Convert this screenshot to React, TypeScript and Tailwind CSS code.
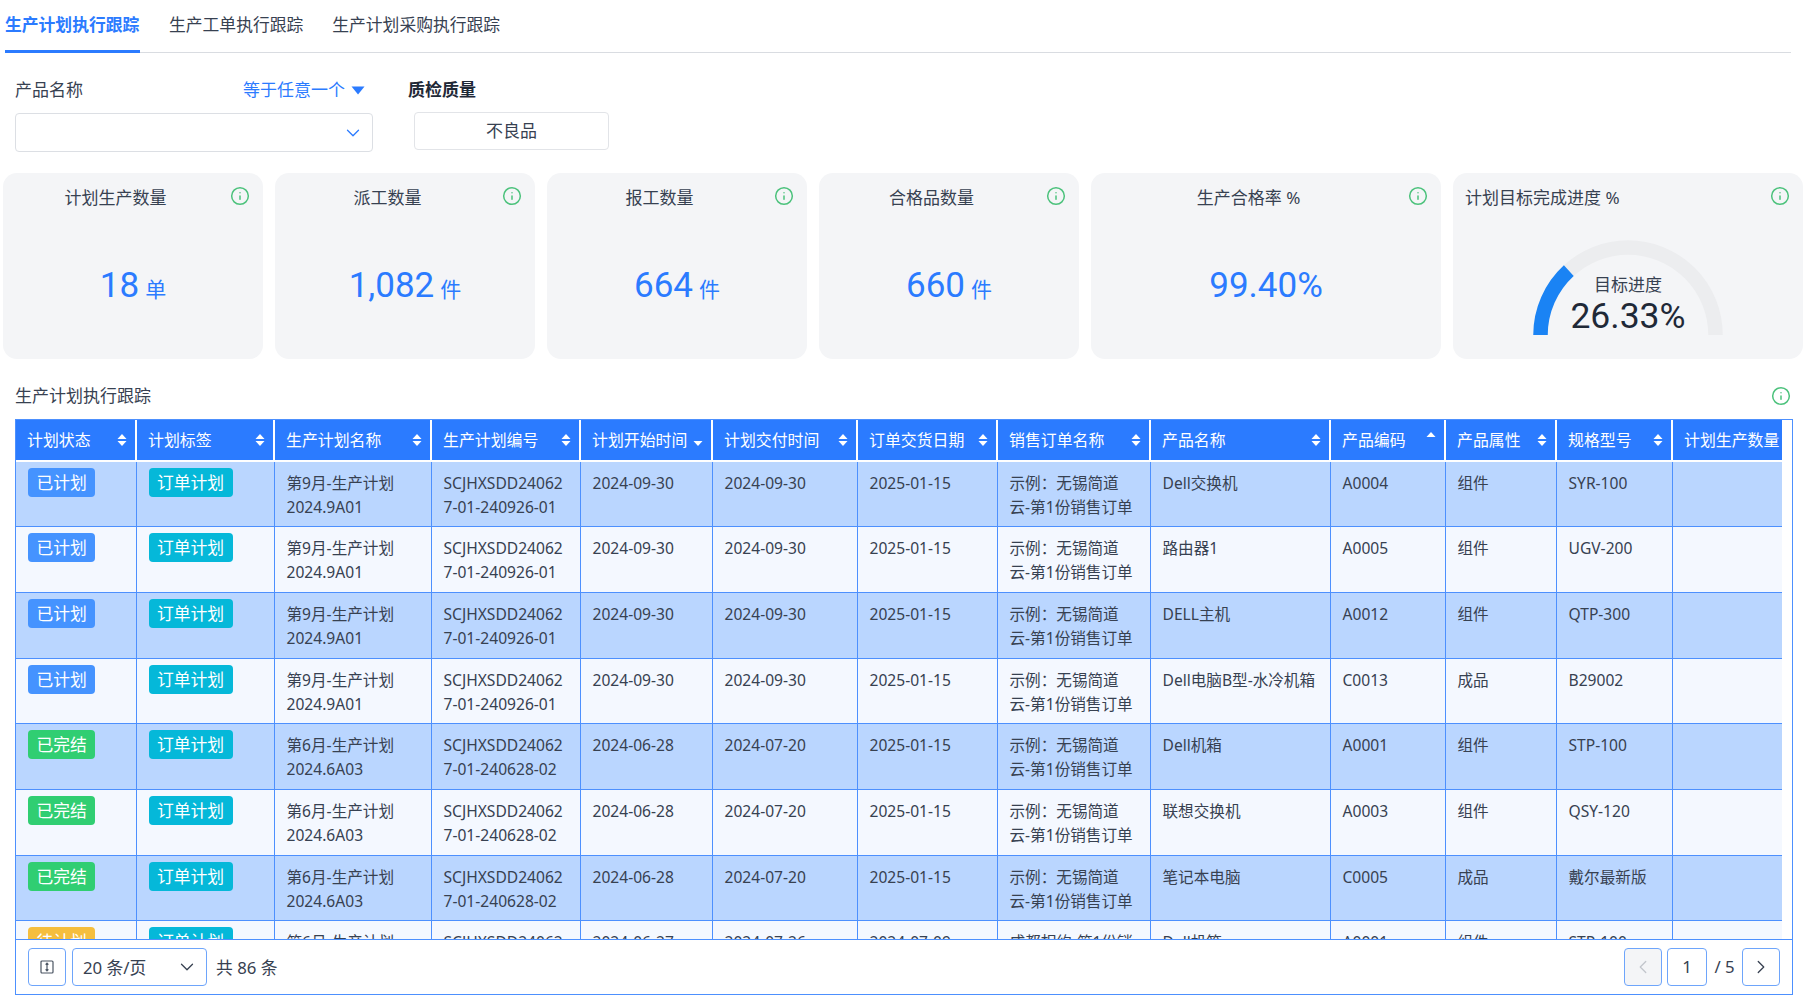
import type { ReactNode } from "react";
import { Info, ChevronDown, ChevronLeft, ChevronRight } from "lucide-react";

const font = "font-['Noto_Sans','Noto_Sans_CJK_SC',sans-serif]";
const numFont = "font-['Roboto','Noto_Sans_CJK_SC',sans-serif]";

function InfoIcon() {
  return <Info className="w-[20px] h-[20px] text-[#4cc27c]" strokeWidth={1.8} />;
}

function SortIcon({ mode = "both" }: { mode?: "both" | "up" | "down" }) {
  return (
    <svg width="10" height="14" viewBox="0 0 10 14" className={mode === "up" ? "-translate-y-[2px] shrink-0" : "shrink-0"} fill="white">
      {mode !== "down" && <path d="M5 1 L9.5 6 L0.5 6 Z" />}
      {mode !== "up" && <path d="M5 13 L0.5 8 L9.5 8 Z" />}
    </svg>
  );
}

const cols: { name: string; w: number; sort?: "both" | "up" | "down" | "none" }[] = [
  { name: "计划状态", w: 120 },
  { name: "计划标签", w: 138 },
  { name: "生产计划名称", w: 157 },
  { name: "生产计划编号", w: 149 },
  { name: "计划开始时间", w: 132, sort: "down" },
  { name: "计划交付时间", w: 145 },
  { name: "订单交货日期", w: 140 },
  { name: "销售订单名称", w: 153 },
  { name: "产品名称", w: 180 },
  { name: "产品编码", w: 115, sort: "up" },
  { name: "产品属性", w: 111 },
  { name: "规格型号", w: 116 },
  { name: "计划生产数量", w: 110, sort: "none" },
];

type Row = {
  status: string; color: string; name: string; name2: string; code: string; start: string; end: string; delivery: string;
  so: string; so2: string; product: string; pcode: string; attr: string; spec: string;
};

const s9 = { status: "已计划", color: "bg-[#4593ff]", name: "第9月-生产计划", name2: "2024.9A01", code: "7-01-240926-01", start: "2024-09-30", end: "2024-09-30", delivery: "2025-01-15", so: "示例：无锡简道", so2: "云-第1份销售订单" };
const s6 = { status: "已完结", color: "bg-[#30ce72]", name: "第6月-生产计划", name2: "2024.6A03", code: "7-01-240628-02", start: "2024-06-28", end: "2024-07-20", delivery: "2025-01-15", so: "示例：无锡简道", so2: "云-第1份销售订单" };

const rows: Row[] = [
  { ...s9, product: "Dell交换机", pcode: "A0004", attr: "组件", spec: "SYR-100" },
  { ...s9, product: "路由器1", pcode: "A0005", attr: "组件", spec: "UGV-200" },
  { ...s9, product: "DELL主机", pcode: "A0012", attr: "组件", spec: "QTP-300" },
  { ...s9, product: "Dell电脑B型-水冷机箱", pcode: "C0013", attr: "成品", spec: "B29002" },
  { ...s6, product: "Dell机箱", pcode: "A0001", attr: "组件", spec: "STP-100" },
  { ...s6, product: "联想交换机", pcode: "A0003", attr: "组件", spec: "QSY-120" },
  { ...s6, product: "笔记本电脑", pcode: "C0005", attr: "成品", spec: "戴尔最新版" },
  { ...s6, status: "待计划", color: "bg-[#f5be3e]", start: "2024-06-27", end: "2024-07-26", delivery: "2024-07-09", so: "成都相约-第1份销", so2: "售订单", product: "Dell机箱", pcode: "A0001", attr: "组件", spec: "STP-100" },
];

function Stat({ title, value, unit, className }: { title: string; value: string; unit?: string; className: string }) {
  return (
    <div className={`relative h-[186px] rounded-[14px] bg-[#f4f5f7] ${className}`}>
      <div className="absolute right-[13px] top-[13px]"><InfoIcon /></div>
      <div className="pt-[12px] pr-[35px] text-center leading-[25px]">{title}</div>
      <div className={`${numFont} mt-[52px] text-center text-[#2b7bff] leading-[48px]`}>
        <span className="text-[35px]">{value}</span>
        {unit && <span className="text-[21px] ml-[6px]">{unit}</span>}
      </div>
    </div>
  );
}

function Td({ children }: { children: ReactNode }) {
  return <td className="border-r border-b border-[#4d90fe] px-[12px] pt-[9px] pb-0 leading-[24px] whitespace-nowrap overflow-hidden">{children}</td>;
}

export default function App() {
  return (
    <div className={`${font} w-[1803px] h-[1006px] overflow-hidden bg-white text-[#374151] text-[17px]`}>
      {/* tabs */}
      <div className="ml-[5px] mr-[12px] h-[53px] flex gap-[29px] border-b border-[#d9dce1] text-[16.8px]">
        <div className="w-[135px] h-[53px] pt-[12px] leading-[26px] font-bold text-[#2b7bff] border-b-[3px] border-[#2b7bff] whitespace-nowrap">生产计划执行跟踪</div>
        <div className="pt-[12px] leading-[26px] whitespace-nowrap">生产工单执行跟踪</div>
        <div className="pt-[12px] leading-[26px] whitespace-nowrap">生产计划采购执行跟踪</div>
      </div>

      {/* filters */}
      <div className="flex h-[120px] pt-[24px] pl-[15px]">
        <div className="w-[358px]">
          <div className="flex justify-between items-center h-[26px] pr-[8px]">
            <span>产品名称</span>
            <span className="flex items-center gap-[6px] text-[#2b7bff]">
              等于任意一个
              <svg width="14" height="9" viewBox="0 0 14 9" fill="#2b7bff"><path d="M0.5 0.5 H13.5 L7 8.5 Z" /></svg>
            </span>
          </div>
          <div className="mt-[10px] h-[39px] border border-[#dcdfe4] rounded-[4px] flex items-center justify-end pr-[8px]">
            <ChevronDown className="w-[22px] h-[22px] text-[#2b7bff]" strokeWidth={1.4} />
          </div>
        </div>
        <div className="ml-[35px]">
          <div className="h-[26px] leading-[26px] font-bold text-[#1f2937]">质检质量</div>
          <div className="mt-[9px] ml-[6px] w-[195px] h-[38px] border border-[#e2e4e8] rounded-[4px] flex items-center justify-center">不良品</div>
        </div>
      </div>

      {/* stats */}
      <div className="flex gap-[12px] pl-[3px]">
        <Stat className="w-[260px]" title="计划生产数量" value="18" unit="单" />
        <Stat className="w-[260px]" title="派工数量" value="1,082" unit="件" />
        <Stat className="w-[260px]" title="报工数量" value="664" unit="件" />
        <Stat className="w-[260px]" title="合格品数量" value="660" unit="件" />
        <Stat className="w-[350px]" title="生产合格率 %" value="99.40%" />
        <div className="relative w-[350px] h-[186px] rounded-[14px] bg-[#f4f5f7]">
          <div className="absolute right-[13px] top-[13px]"><InfoIcon /></div>
          <div className="pt-[12px] pl-[12px] leading-[25px]">计划目标完成进度 %</div>
          <div className="relative mx-auto mt-[29px] w-[190px] h-[96px]">
            <svg width="190" height="96" viewBox="0 0 190 96" fill="none">
              <path d="M7.5 96 A87.5 87.5 0 0 1 182.5 96" stroke="#ecedef" strokeWidth="14.5" />
              <path d="M7.5 96 A87.5 87.5 0 0 1 35.8 31.6" stroke="#1a83f4" strokeWidth="14.5" />
            </svg>
            <div className="absolute left-0 right-0 top-[33px] text-center leading-[26px]">目标进度</div>
            <div className={`${numFont} absolute left-0 right-0 top-[53px] text-center text-[35.5px] leading-[48px] text-[#1f2937]`}>26.33%</div>
          </div>
        </div>
      </div>

      {/* table title */}
      <div className="flex justify-between items-center h-[26px] mt-[24px] pl-[15px] pr-[12px]">
        <span>生产计划执行跟踪</span>
        <InfoIcon />
      </div>

      {/* table */}
      <div className="ml-[15px] mt-[10px] w-[1778px] h-[576px] border border-[#4d90fe] flex flex-col">
        <div className="h-[519px] overflow-hidden pr-[10px]">
          <table className="table-fixed w-[1766px] border-collapse text-[15.6px]">
            <colgroup>
              {cols.map((c) => <col key={c.name} style={{ width: c.w }} />)}
            </colgroup>
            <thead>
              <tr className="h-[41px] bg-[#2b7bff] text-white">
                {cols.map((c) => (
                  <th key={c.name} className="font-normal text-left border-r-2 border-b-2 last:border-r-0 border-white pl-[11px] pr-[8px] py-0 text-[15.9px] whitespace-nowrap overflow-hidden">
                    <div className="flex justify-between items-center pt-[1px]">
                      <span>{c.name}</span>
                      {c.sort !== "none" && <SortIcon mode={c.sort ?? "both"} />}
                    </div>
                  </th>
                ))}
              </tr>
            </thead>
            <tbody>
              {rows.map((r, i) => (
                <tr key={i} className={`h-[65.7px] align-top ${i % 2 === 0 ? "bg-[#bad6ff]" : "bg-[#f4f8ff]"}`}>
                  <Td><span className={`inline-block ${r.color} text-white rounded-[4px] px-[8.5px] text-[16.8px] leading-[29px] mt-[-3px]`}>{r.status}</span></Td>
                  <Td><span className="inline-block bg-[#05b8d9] text-white rounded-[4px] px-[8.5px] text-[16.8px] leading-[29px] mt-[-3px]">订单计划</span></Td>
                  <Td>{r.name}<br />{r.name2}</Td>
                  <Td>SCJHXSDD24062<br />{r.code}</Td>
                  <Td>{r.start}</Td>
                  <Td>{r.end}</Td>
                  <Td>{r.delivery}</Td>
                  <Td>{r.so}<br />{r.so2}</Td>
                  <Td>{r.product}</Td>
                  <Td>{r.pcode}</Td>
                  <Td>{r.attr}</Td>
                  <Td>{r.spec}</Td>
                  <td className="border-b border-[#4d90fe]"></td>
                </tr>
              ))}
            </tbody>
          </table>
        </div>
        {/* footer */}
        <div className="flex-1 border-t border-[#4d90fe] flex items-center pl-[12px] pr-[12px] gap-[6px] text-[16.8px]">
          <div className="w-[38px] h-[38px] border border-[#6ea5fb] rounded-[4px] flex items-center justify-center">
            <svg width="14" height="14" viewBox="0 0 14 14" fill="none" stroke="#4b5563" strokeWidth="1.2">
              <rect x="1" y="1" width="12" height="12" rx="1" />
              <path d="M7 3.2 V10.8 M5.6 4.6 L7 3.2 L8.4 4.6 M5.6 9.4 L7 10.8 L8.4 9.4" />
            </svg>
          </div>
          <div className="w-[135px] h-[38px] border border-[#6ea5fb] rounded-[4px] flex items-center justify-between pl-[10px] pr-[8px]">
            <span className="pt-[1px]">20 条/页</span>
            <ChevronDown className="w-[22px] h-[22px] text-[#374151]" strokeWidth={1.4} />
          </div>
          <span className="ml-[3px] pt-[1px]">共 86 条</span>
          <div className="ml-auto flex items-center gap-[5px]">
            <div className="w-[38px] h-[38px] border border-[#6ea5fb] rounded-[4px] bg-[#f4f5f7] flex items-center justify-center">
              <ChevronLeft className="w-[22px] h-[22px] text-[#c2c6cc]" strokeWidth={1.4} />
            </div>
            <div className="w-[40px] h-[38px] border border-[#6ea5fb] rounded-[4px] flex items-center justify-center">1</div>
            <span className="w-[25px] text-center whitespace-nowrap">/ 5</span>
            <div className="w-[38px] h-[38px] border border-[#6ea5fb] rounded-[4px] flex items-center justify-center">
              <ChevronRight className="w-[22px] h-[22px] text-[#374151]" strokeWidth={1.4} />
            </div>
          </div>
        </div>
      </div>
    </div>
  );
}
